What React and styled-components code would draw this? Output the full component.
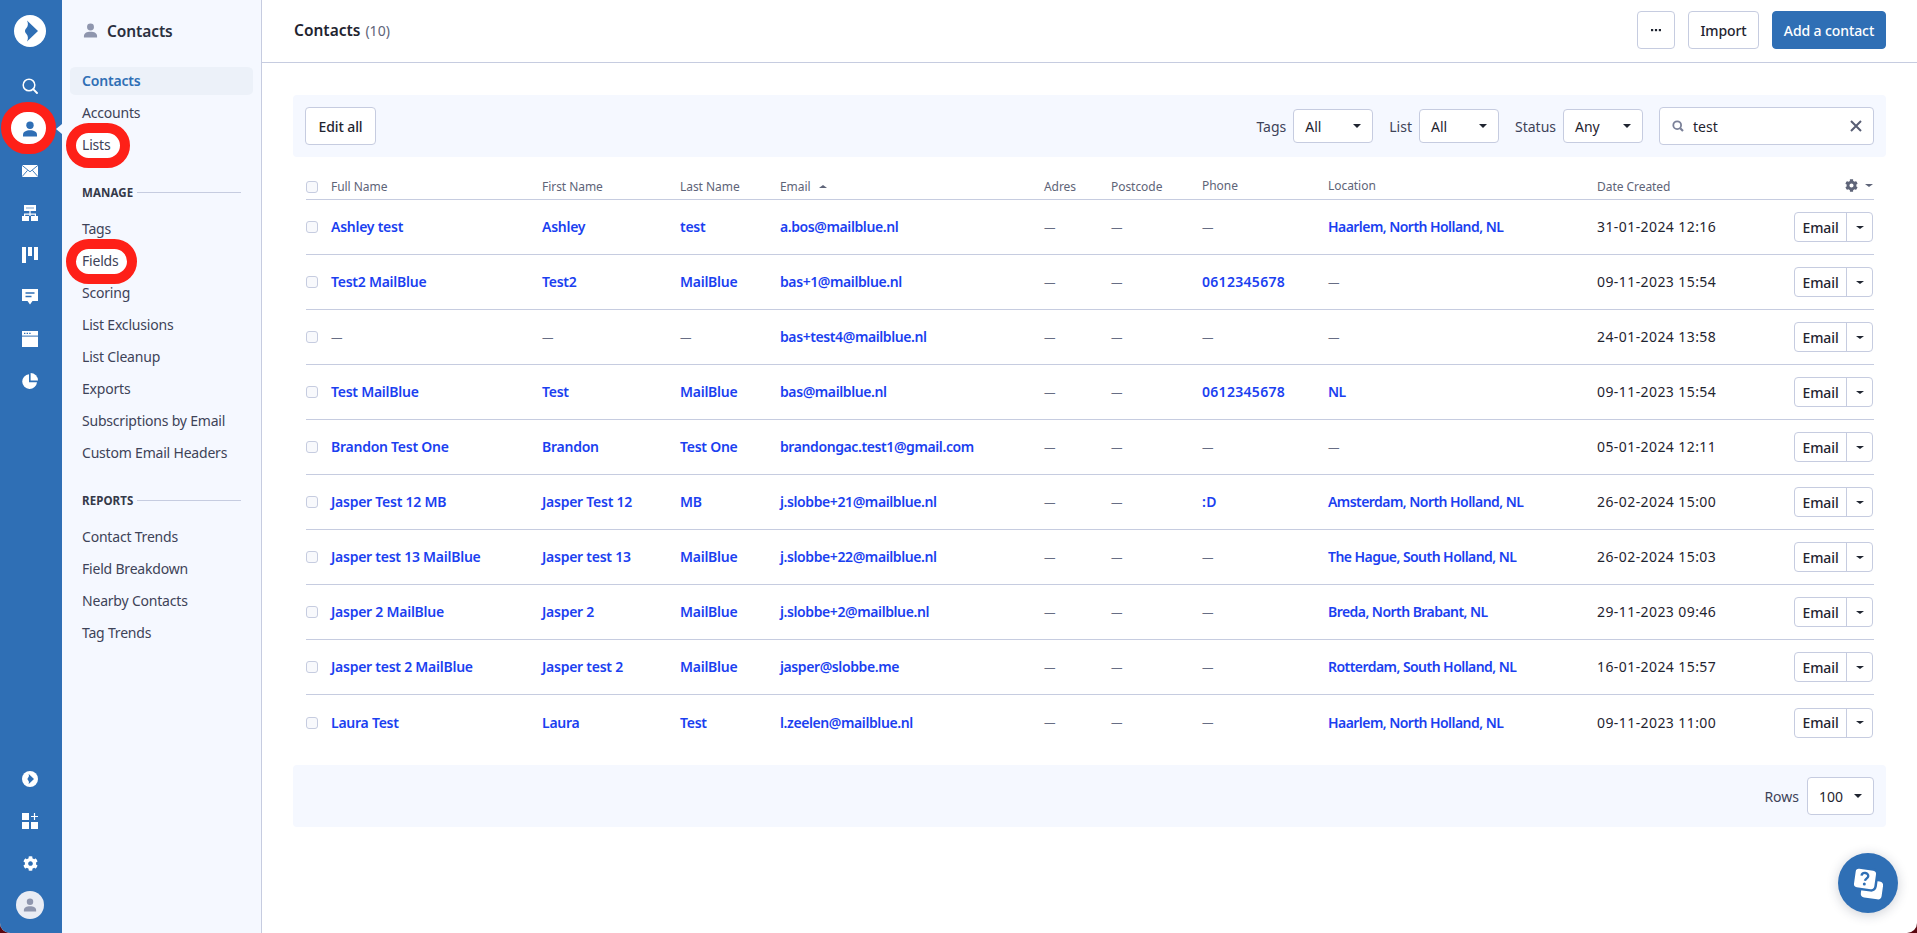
import React from "react";
import styled, { createGlobalStyle } from "styled-components";
import { FaCog } from "react-icons/fa";

const FONT = `"Noto Sans", "Open Sans", Arial, sans-serif`;
const BLUE = "#2f6fb5";
const LINE = "#c6cce0";
const PANEL = "#f5f8ff";
const LINK = "#1b3ff0";
const RED = "#fe2018";

const Global = createGlobalStyle`
  html, body { margin: 0; padding: 0; height: 100%; background: #5a0710; }
  body { font-family: ${FONT}; font-size: 14px; color: #1f2430; overflow: hidden; }
  *, *::before, *::after { box-sizing: border-box; }
`;

const Page = styled.div`
  display: flex;
  width: 1917px;
  height: 933px;
  background: #fff;
  border-radius: 0 0 10px 10px;
  overflow: hidden;
  position: relative;
`;

/* icon rail */
const Rail = styled.nav`
  flex: 0 0 62px;
  display: flex;
  flex-direction: column;
  align-items: stretch;
  padding-right: 2px;
  padding-bottom: 7px;
  background: ${BLUE};
  color: #fff;
`;
const LogoBox = styled.div`
  height: 66px;
  display: flex;
  align-items: center;
  justify-content: center;
  padding-bottom: 4px;
`;
const RailItem = styled.div`
  position: relative;
  height: 42px;
  display: flex;
  align-items: center;
  justify-content: center;
  color: ${(p) => (p.$active ? BLUE : "#fff")};
  svg { position: relative; z-index: 1; }
  ${(p) =>
    p.$active &&
    `
    &::before {
      content: "";
      position: absolute;
      left: 1px;
      top: -6px;
      width: 55px;
      height: 52px;
      background: #fff;
      border: 10px solid ${RED};
      border-radius: 26px;
    }
    &::after {
      content: "";
      position: absolute;
      right: -2px;
      top: 16px;
      border-top: 5.5px solid transparent;
      border-bottom: 5.5px solid transparent;
      border-right: 6px solid ${PANEL};
    }
  `}
`;
const RailSpacer = styled.div`
  flex: 1;
`;
const Avatar = styled.div`
  width: 28px;
  height: 28px;
  border-radius: 50%;
  background: #e9ecf4;
  color: #8f96ae;
  display: flex;
  align-items: center;
  justify-content: center;
`;

/* secondary sidebar */
const Side = styled.aside`
  flex: 0 0 200px;
  background: ${PANEL};
  border-right: 1px solid ${LINE};
  display: flex;
  flex-direction: column;
`;
const SideHead = styled.div`
  height: 65px;
  flex: none;
  display: flex;
  align-items: center;
  gap: 9px;
  padding: 0 0 4px 21px;
  font-size: 15.5px;
  font-weight: 600;
  letter-spacing: -0.1px;
  color: #2b3040;
  svg { color: #8f96ae; }
`;
const SideNav = styled.div`
  display: flex;
  flex-direction: column;
  padding: 0 8px;
`;
const NavItem = styled.a`
  position: relative;
  height: 32px;
  display: flex;
  align-items: center;
  padding: 0 0 1px 12px;
  font-size: 14px;
  letter-spacing: -0.2px;
  color: ${(p) => (p.$active ? BLUE : "#3e4358")};
  font-weight: ${(p) => (p.$active ? 600 : 400)};
  background: ${(p) => (p.$active ? "#ecf1f9" : "transparent")};
  background-clip: padding-box;
  border-top: 2px solid transparent;
  border-bottom: 2px solid transparent;
  border-radius: 6px;
  span { position: relative; z-index: 1; }
  ${(p) =>
    p.$ring &&
    `
    &::before {
      content: "";
      position: absolute;
      left: -4px;
      top: -8px;
      width: ${p.$ring}px;
      height: 45px;
      background: #fff;
      border: 10px solid ${RED};
      border-radius: 23px;
    }
  `}
`;
const SectionLabel = styled.div`
  height: 20px;
  margin: 22px 12px 10px 12px;
  padding-bottom: 1px;
  display: flex;
  align-items: center;
  gap: 4px;
  font-size: 11.5px;
  font-weight: 700;
  letter-spacing: 0.1px;
  color: #343949;
  &::after {
    content: "";
    flex: 1;
    height: 1px;
    background: ${LINE};
  }
`;

/* main */
const Main = styled.main`
  flex: 1;
  min-width: 0;
  display: flex;
  flex-direction: column;
`;
const TopBar = styled.header`
  height: 63px;
  flex: none;
  display: flex;
  align-items: center;
  justify-content: space-between;
  padding: 0 31px 2px 32px;
  border-bottom: 1px solid ${LINE};
`;
const Title = styled.h1`
  margin: 0;
  font-size: 15.5px;
  font-weight: 600;
  color: #1f2430;
  small {
    font-size: 14px;
    font-weight: 400;
    color: #5e6478;
    margin-left: 5px;
  }
`;
const Actions = styled.div`
  display: flex;
  gap: 13px;
`;
const Button = styled.button`
  height: 38px;
  width: ${(p) => p.$w}px;
  padding: 0;
  display: flex;
  align-items: center;
  justify-content: center;
  font: 500 14px ${FONT};
  letter-spacing: -0.1px;
  color: ${(p) => (p.$primary ? "#fff" : "#1f2430")};
  background: ${(p) => (p.$primary ? BLUE : "#fff")};
  border: 1px solid ${(p) => (p.$primary ? BLUE : LINE)};
  border-radius: 4px;
`;
const Content = styled.div`
  padding: 32px 31px 0;
`;
const Panel = styled.div`
  height: 62px;
  display: flex;
  align-items: center;
  justify-content: space-between;
  padding: 0 12px;
  background: ${PANEL};
  border-radius: 4px;
`;
const Filters = styled.div`
  display: flex;
  align-items: center;
  gap: 16px;
`;
const Filter = styled.label`
  display: flex;
  align-items: center;
  gap: 7px;
  font-size: 14px;
  color: #3e4358;
`;
const Select = styled.div`
  width: ${(p) => p.$w || 80}px;
  height: ${(p) => p.$h || 34}px;
  display: flex;
  align-items: center;
  justify-content: space-between;
  padding: 0 11px;
  background: #fff;
  border: 1px solid ${LINE};
  border-radius: 4px;
  font-size: 14px;
  color: #1f2430;
`;
const Caret = styled.i`
  display: block;
  width: 0;
  height: 0;
  border-left: ${(p) => p.$s || 4.5}px solid transparent;
  border-right: ${(p) => p.$s || 4.5}px solid transparent;
  ${(p) => (p.$up ? "border-bottom" : "border-top")}: ${(p) => (p.$s || 4.5) * 0.9}px solid ${(p) => p.$c || "#1f2430"};
`;
const Search = styled.div`
  width: 215px;
  height: 38px;
  display: flex;
  align-items: center;
  gap: 9px;
  padding: 0 11px 0 12px;
  background: #fff;
  border: 1px solid ${LINE};
  border-radius: 4px;
  font-size: 14px;
  color: #1f2430;
  span { flex: 1; }
  svg { display: block; }
`;

/* table */
const cols = "25px 211px 138px 100px 264px 67px 91px 126px 269px 197px 1fr";
const Table = styled.div`
  margin: 0 12px 0 13px;
`;
const HeadRow = styled.div`
  display: grid;
  grid-template-columns: ${cols};
  align-items: center;
  height: 43px;
  padding-top: 17px;
  border-bottom: 1px solid ${LINE};
  font-size: 12px;
  letter-spacing: -0.05px;
  color: #5e6478;
`;
const HeadCell = styled.div`
  display: flex;
  align-items: center;
  gap: 8px;
  ${(p) => p.$end && "justify-content: flex-end; gap: 7px; padding-right: 1px;"}
  ${(p) => p.$raised && "padding-bottom: 2px;"}
`;
const Row = styled.div`
  display: grid;
  grid-template-columns: ${cols};
  align-items: center;
  height: 55px;
  border-bottom: 1px solid ${LINE};
  font-size: 14px;
  &:last-child { border-bottom: 0; }
`;
const Cell = styled.div`
  padding-bottom: 1px;
`;
const Check = styled.span`
  display: block;
  width: 12px;
  height: 12px;
  background: #f8f9fc;
  border: 1px solid ${LINE};
  border-radius: 3px;
`;
const LinkCell = styled.a`
  color: ${LINK};
  font-weight: 600;
  letter-spacing: ${(p) => p.$ls ?? -0.25}px;
  white-space: nowrap;
`;
const Dash = styled.span`
  display: inline-block;
  color: #676d84;
  font-size: 11.5px;
  vertical-align: 1.5px;
`;
const DateCell = styled(Cell)`
  color: #1f2430;
  white-space: nowrap;
  letter-spacing: 0.42px;
`;
const RowActions = styled.div`
  justify-self: end;
  margin-right: 1px;
  display: flex;
  width: 79px;
  height: 30px;
  border: 1px solid ${LINE};
  border-radius: 4px;
  background: #fff;
`;
const EmailBtn = styled.span`
  flex: 1;
  display: flex;
  align-items: center;
  justify-content: center;
  font-weight: 500;
  font-size: 14px;
  letter-spacing: -0.1px;
  border-right: 1px solid ${LINE};
`;
const MoreBtn = styled.span`
  flex: 0 0 25px;
  display: flex;
  align-items: center;
  justify-content: center;
`;
const Pager = styled(Panel)`
  margin-top: 15px;
  justify-content: flex-end;
  gap: 8px;
  font-size: 14px;
  color: #3e4358;
`;
const Help = styled.div`
  position: absolute;
  left: 1838px;
  top: 853px;
  width: 60px;
  height: 60px;
  border-radius: 50%;
  background: ${BLUE};
  box-shadow: 0 2px 12px rgba(30, 40, 70, 0.22);
`;

/* icons */
const Person = ({ s = 16 }) => (
  <svg width={s} height={s} viewBox="0 0 16 16" fill="currentColor">
    <circle cx="8" cy="4.2" r="3.7" />
    <path d="M1 15.5v-1.7C1 10.9 4 9.3 8 9.3s7 1.6 7 4.5v1.7z" />
  </svg>
);
const LOGO_PATH = "M13 5.500 24 16 13 26.500C14.500 23 14 21 12.500 19 11.500 17.800 11 17 11 16S11.500 14.200 12.500 13C14 11 14.500 9 13 5.500Z";
const Logo = () => (
  <svg width="32" height="32" viewBox="0 0 32 32">
    <circle cx="16" cy="16" r="16" fill="#fff" />
    <path fill={BLUE} d={LOGO_PATH} />
  </svg>
);
const SearchIcon = () => (
  <svg width="16" height="16" viewBox="0 0 16 16" fill="none" stroke="#fff" strokeWidth="1.500" style={{ marginBottom: 2 }}>
    <circle cx="7" cy="7" r="5.800" />
    <path d="M11.200 11.200l3.800 3.800" strokeWidth="1.900" strokeLinecap="round" />
  </svg>
);
const Mail = () => (
  <svg width="16" height="16" viewBox="0 0 16 13" fill="#fff" stroke={BLUE}>
    <rect width="16" height="12" y=".5" stroke="none" />
    <path d="M0 .8 8 7.300 16 .8M0 12.200l5.600-6.400M16 12.200l-5.600-6.400" fill="none" strokeWidth=".9" />
  </svg>
);
const Org = () => (
  <svg width="16" height="16" viewBox="0 0 16 16" fill="#fff">
    <rect x="2" width="12" height="6" />
    <rect x="4" y="2.400" width="8" height="1.200" fill="#8fb2da" />
    <path d="M7.400 6h1.200v2.600H14V11h-1.200V9.800H8.600V11H7.400V9.800H3.200V11H2V8.600h5.400z" />
    <rect y="11" width="7" height="5" />
    <rect x="9" y="11" width="7" height="5" />
  </svg>
);
const Board = () => (
  <svg width="16" height="16" viewBox="0 0 16 16" fill="#fff">
    <rect width="4" height="16" />
    <rect x="6" width="4" height="9" />
    <rect x="12" width="4" height="13" />
  </svg>
);
const Chat = () => (
  <svg width="16" height="16" viewBox="0 0 16 16">
    <path fill="#fff" d="M0 0h16v12h-5.500L8 15.500 5.500 12H0z" />
    <path stroke={BLUE} strokeWidth="1.300" d="M3.500 4h9M3.500 7.500h6" />
  </svg>
);
const Win = () => (
  <svg width="16" height="16" viewBox="0 0 16 16" fill="#fff">
    <rect width="16" height="4.600" />
    <rect y="5.600" width="16" height="10.400" />
    <path fill={BLUE} d="M2 1.700h1.400v1.400H2zM4.600 1.700H6v1.400H4.600zM7.200 1.700h1.400v1.400H7.200z" />
  </svg>
);
const Pie = () => (
  <svg width="16" height="16" viewBox="0 0 16 16" fill="#fff">
    <path d="M7 1.200A7.400 7.400 0 1 0 15 9.200H7z" />
    <path d="M8.600 0A7.400 7.400 0 0 1 16 7.400H8.600z" />
  </svg>
);
const Mini = () => (
  <svg width="16" height="16" viewBox="0 0 32 32">
    <circle cx="16" cy="16" r="16" fill="#fff" />
    <path fill={BLUE} d={LOGO_PATH} />
  </svg>
);
const Apps = () => (
  <svg width="16" height="16" viewBox="0 0 16 16" fill="#fff">
    <rect width="7" height="7" />
    <rect y="9" width="7" height="7" />
    <rect x="9" y="9" width="7" height="7" />
    <path d="M11.900 0h1.200v2.900H16v1.200h-2.900V7h-1.200V4.100H9V2.900h2.900z" />
  </svg>
);
const Close = () => (
  <svg width="12" height="12" viewBox="0 0 12 12" stroke="#585e74" strokeWidth="2" fill="none">
    <path d="M1 1l10 10M11 1 1 11" />
  </svg>
);
const LensSmall = () => (
  <svg width="12" height="12" viewBox="0 0 12 12" fill="none" stroke="#7a8098" strokeWidth="1.800">
    <circle cx="5.200" cy="5.200" r="3.900" />
    <path d="M8.200 8.200 11 11" strokeWidth="2.200" />
  </svg>
);
const Dots = () => (
  <svg width="10" height="4" viewBox="0 0 10 4" fill="#1f2430">
    <rect y="1" width="2.200" height="2.200" />
    <rect x="3.900" y="1" width="2.200" height="2.200" />
    <rect x="7.800" y="1" width="2.200" height="2.200" />
  </svg>
);
const HelpIcon = () => (
  <svg width="60" height="60" viewBox="0 0 60 60">
    <rect x="23.500" y="27.500" width="21" height="18" rx="4" transform="rotate(8 34 36)" fill="#fff" />
    <rect x="15.500" y="15.500" width="23" height="21" rx="4.500" transform="rotate(8 27 26)" fill="#fff" stroke={BLUE} strokeWidth="2.500" />
    <path d="M23.500 22.700c.3-2 2-2.900 3.800-2.700 2 .2 3.300 1.700 2.900 3.500-.4 1.800-2.800 2-3.300 4.300" fill="none" stroke={BLUE} strokeWidth="2.300" />
    <circle cx="26.300" cy="31" r="1.500" fill={BLUE} />
  </svg>
);

const contacts = [
  ["Ashley test", "Ashley", "test", "a.bos@mailblue.nl", "", "Haarlem, North Holland, NL", "31-01-2024 12:16"],
  ["Test2 MailBlue", "Test2", "MailBlue", "bas+1@mailblue.nl", "0612345678", "", "09-11-2023 15:54"],
  ["", "", "", "bas+test4@mailblue.nl", "", "", "24-01-2024 13:58"],
  ["Test MailBlue", "Test", "MailBlue", "bas@mailblue.nl", "0612345678", "NL", "09-11-2023 15:54"],
  ["Brandon Test One", "Brandon", "Test One", "brandongac.test1@gmail.com", "", "", "05-01-2024 12:11"],
  ["Jasper Test 12 MB", "Jasper Test 12", "MB", "j.slobbe+21@mailblue.nl", ":D", "Amsterdam, North Holland, NL", "26-02-2024 15:00"],
  ["Jasper test 13 MailBlue", "Jasper test 13", "MailBlue", "j.slobbe+22@mailblue.nl", "", "The Hague, South Holland, NL", "26-02-2024 15:03"],
  ["Jasper 2 MailBlue", "Jasper 2", "MailBlue", "j.slobbe+2@mailblue.nl", "", "Breda, North Brabant, NL", "29-11-2023 09:46"],
  ["Jasper test 2 MailBlue", "Jasper test 2", "MailBlue", "jasper@slobbe.me", "", "Rotterdam, South Holland, NL", "16-01-2024 15:57"],
  ["Laura Test", "Laura", "Test", "l.zeelen@mailblue.nl", "", "Haarlem, North Holland, NL", "09-11-2023 11:00"],
];

const Val = ({ v, ls }) => (v ? <LinkCell $ls={ls}>{v}</LinkCell> : <Dash>—</Dash>);

export default function App() {
  return (
    <Page>
      <Global />
      <Rail>
        <LogoBox><Logo /></LogoBox>
        <RailItem><SearchIcon /></RailItem>
        <RailItem $active><Person /></RailItem>
        <RailItem><Mail /></RailItem>
        <RailItem><Org /></RailItem>
        <RailItem><Board /></RailItem>
        <RailItem><Chat /></RailItem>
        <RailItem><Win /></RailItem>
        <RailItem><Pie /></RailItem>
        <RailSpacer />
        <RailItem><Mini /></RailItem>
        <RailItem><Apps /></RailItem>
        <RailItem><FaCog size={15} /></RailItem>
        <RailItem><Avatar><Person s={14} /></Avatar></RailItem>
      </Rail>
      <Side>
        <SideHead><Person s={15} />Contacts</SideHead>
        <SideNav>
          <NavItem $active><span>Contacts</span></NavItem>
          <NavItem><span>Accounts</span></NavItem>
          <NavItem $ring={64}><span>Lists</span></NavItem>
          <SectionLabel>MANAGE</SectionLabel>
          <NavItem><span>Tags</span></NavItem>
          <NavItem $ring={71}><span>Fields</span></NavItem>
          <NavItem><span>Scoring</span></NavItem>
          <NavItem><span>List Exclusions</span></NavItem>
          <NavItem><span>List Cleanup</span></NavItem>
          <NavItem><span>Exports</span></NavItem>
          <NavItem><span>Subscriptions by Email</span></NavItem>
          <NavItem><span>Custom Email Headers</span></NavItem>
          <SectionLabel>REPORTS</SectionLabel>
          <NavItem><span>Contact Trends</span></NavItem>
          <NavItem><span>Field Breakdown</span></NavItem>
          <NavItem><span>Nearby Contacts</span></NavItem>
          <NavItem><span>Tag Trends</span></NavItem>
        </SideNav>
      </Side>
      <Main>
        <TopBar>
          <Title>Contacts<small>(10)</small></Title>
          <Actions>
            <Button $w={38}><Dots /></Button>
            <Button $w={71}>Import</Button>
            <Button $w={114} $primary>Add a contact</Button>
          </Actions>
        </TopBar>
        <Content>
          <Panel>
            <Button $w={71}>Edit all</Button>
            <Filters>
              <Filter>Tags<Select>All<Caret /></Select></Filter>
              <Filter>List<Select>All<Caret /></Select></Filter>
              <Filter>Status<Select>Any<Caret /></Select></Filter>
              <Search><LensSmall /><span>test</span><Close /></Search>
            </Filters>
          </Panel>
          <Table>
            <HeadRow>
              <Check />
              <HeadCell>Full Name</HeadCell>
              <HeadCell>First Name</HeadCell>
              <HeadCell>Last Name</HeadCell>
              <HeadCell>Email<Caret $up $s={4} $c="#5e6478" /></HeadCell>
              <HeadCell>Adres</HeadCell>
              <HeadCell>Postcode</HeadCell>
              <HeadCell $raised>Phone</HeadCell>
              <HeadCell $raised>Location</HeadCell>
              <HeadCell>Date Created</HeadCell>
              <HeadCell $end $raised>
                <FaCog size={13} />
                <Caret $s={4} $c="#5e6478" />
              </HeadCell>
            </HeadRow>
            {contacts.map((c, i) => (
              <Row key={i}>
                <Check />
                <Cell><Val v={c[0]} /></Cell>
                <Cell><Val v={c[1]} /></Cell>
                <Cell><Val v={c[2]} /></Cell>
                <Cell><Val v={c[3]} ls={-0.4} /></Cell>
                <Cell><Dash>—</Dash></Cell>
                <Cell><Dash>—</Dash></Cell>
                <Cell><Val v={c[4]} ls={0.3} /></Cell>
                <Cell><Val v={c[5]} ls={-0.55} /></Cell>
                <DateCell>{c[6]}</DateCell>
                <RowActions>
                  <EmailBtn>Email</EmailBtn>
                  <MoreBtn><Caret $s={4} /></MoreBtn>
                </RowActions>
              </Row>
            ))}
          </Table>
          <Pager>
            Rows
            <Select $w={67} $h={38}>100<Caret $s={4.5} /></Select>
          </Pager>
        </Content>
      </Main>
      <Help><HelpIcon /></Help>
    </Page>
  );
}
